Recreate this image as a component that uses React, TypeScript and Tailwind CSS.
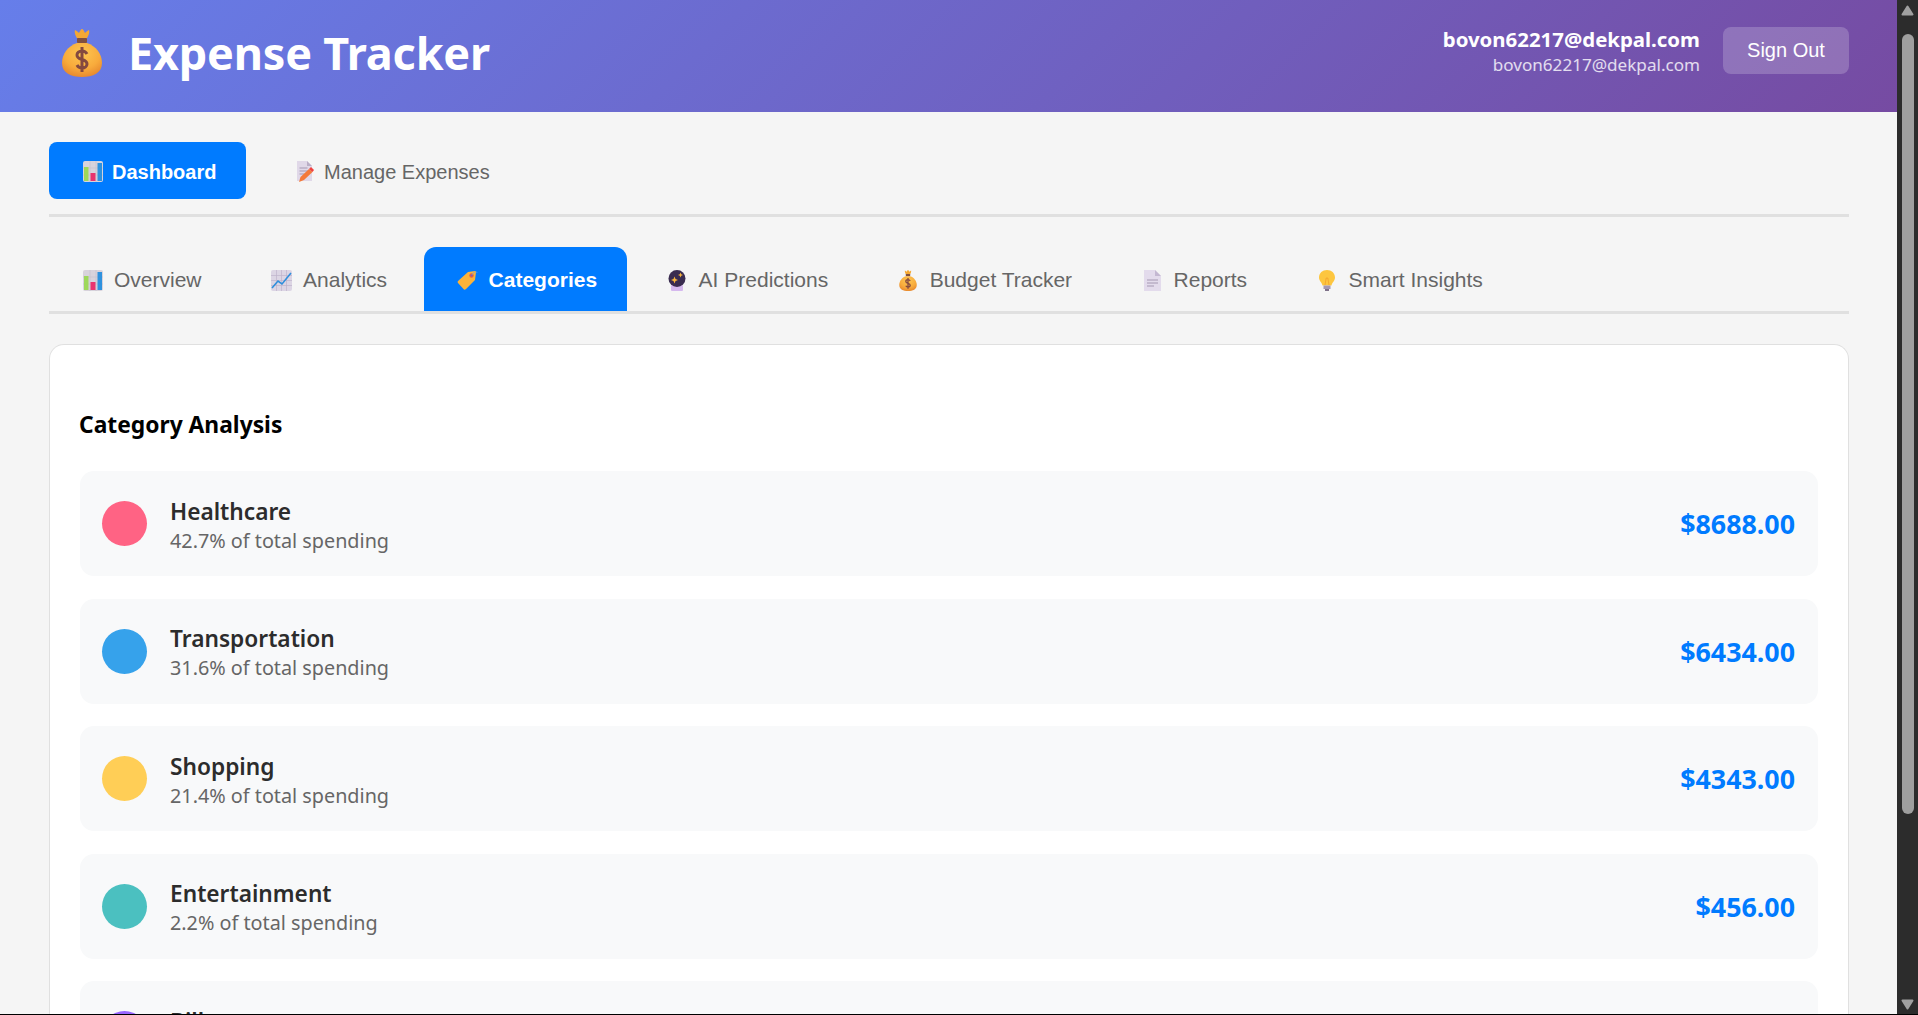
import type { ReactNode } from "react";

const sans = "font-['Liberation_Sans',Arial,sans-serif]";
const ui = "font-['Noto_Sans',sans-serif]";

const BarsIcon = () => (
  <svg width="20" height="21" viewBox="0 0 20 21">
    <rect x="0" y="0" width="20" height="21" rx="2" fill="#d8d3dc" />
    <path d="M0 7h20M0 14h20M7 0v21M13 0v21" stroke="#c6bfce" strokeWidth="0.6" />
    <rect x="1" y="6" width="4.500" height="14" fill="#9ed85a" />
    <rect x="7.500" y="12" width="5" height="8" fill="#e8336f" />
    <rect x="14.500" y="2" width="4.500" height="18" fill="#2f92de" />
  </svg>
);

const MemoIcon = () => (
  <svg width="18" height="21" viewBox="0 0 18 21" className="ml-[5px]">
    <path d="M1 0h10l5 5v15H1z" fill="#e0d8e8" />
    <path d="M11 0l5 5h-5z" fill="#b9aec6" />
    <path d="M3.500 7h8M3.500 10h9M3.500 13h5" stroke="#a598b2" strokeWidth="1" />
    <path d="M3 21l1.500-5L13 8l3.500 3L8 19z" fill="#f47a3a" />
    <path d="M13 8l2-2 3 3-1.500 2z" fill="#f0413f" />
  </svg>
);

const TrendIcon = () => (
  <svg width="21" height="21" viewBox="0 0 21 21">
    <rect width="21" height="21" rx="2" fill="#dcd5e4" />
    <path d="M0 5.500h21M0 10.500h21M0 15.500h21M5.500 0v21M10.500 0v21M15.500 0v21" stroke="#bfb5cc" strokeWidth="0.7" />
    <path d="M1 18l6-7 4 3L20 3" fill="none" stroke="#2f8fdc" strokeWidth="1.600" />
  </svg>
);

const TagIcon = () => (
  <svg width="21" height="20" viewBox="0 0 21 20">
    <path d="M1 11L11 2l7-1c1 0 1 1 1 1l-1 8L9 19c-1 1-2 1-2.500 0L1 13c-.500-.500-.500-1.500 0-2z" fill="#fbb33a" />
    <circle cx="14.500" cy="5.500" r="2.200" fill="#e8633f" />
    <circle cx="14.500" cy="5.500" r="1" fill="#7a5ec0" />
    <path d="M15 5c1-3 4.500-4 5.500-2" fill="none" stroke="#6aa4dc" strokeWidth="0.7" />
  </svg>
);

const BallIcon = () => (
  <svg width="18" height="21" viewBox="0 0 18 21">
    <rect x="3" y="15" width="12" height="6" rx="1" fill="#d5b8ee" />
    <circle cx="9" cy="8.500" r="8.500" fill="#3a2c50" />
    <path d="M6.500 6.500l1 2.500 2.500 1-2.500 1-1 2.500-1-2.500-2.500-1 2.500-1z" fill="#f8b53c" />
    <path d="M12.500 2.500l.700 1.800 1.800.700-1.800.700-.700 1.800-.700-1.800-1.800-.700 1.800-.700z" fill="#f8b53c" />
  </svg>
);

const BagIcon = ({ id, width, height }: { id: string; width: number; height: number }) => (
  <svg width={width} height={height} viewBox="0 0 40 48">
    <defs>
      <radialGradient id={id} cx="0.5" cy="0.3" r="0.75">
        <stop offset="0" stopColor="#fdc651" />
        <stop offset="0.6" stopColor="#f8ab3c" />
        <stop offset="1" stopColor="#e5842c" />
      </radialGradient>
    </defs>
    <path d="M13 1c2 1 3 2 4 3 1-2 2-4 3-4s2 2 3 4c1-1 2-2 4-3 1 2-1 7-2 8H15c-1-1-3-6-2-8z" fill="#f5a832" />
    <rect x="15" y="9" width="10" height="5" rx="1" fill="#80503f" />
    <path d="M15 14h10c9 3 15 11 15 20 0 10-9 14-20 14S0 44 0 34c0-9 6-17 15-20z" fill={`url(#${id})`} />
    <path
      d="M25 25c-1-2-3-3-5-3-3 0-5 2-5 4 0 6 10 3 10 9 0 2-2 4-5 4-2 0-4-1-5-3M20 18v25"
      fill="none"
      stroke="#84493f"
      strokeWidth="3"
    />
  </svg>
);

const PageIcon = () => (
  <svg width="17" height="21" viewBox="0 0 17 21">
    <path d="M0 0h11l6 6v15H0z" fill="#e3dbec" />
    <path d="M11 0l6 6h-6z" fill="#c4b8d2" />
    <path d="M3 10h11M3 13h11M3 16h7" stroke="#a598b2" strokeWidth="1" />
  </svg>
);

const BulbIcon = () => (
  <svg width="16" height="21" viewBox="0 0 16 21">
    <path d="M8 0c4.500 0 8 3 8 7.500 0 3.500-3 5-3.500 8h-9C3 12.500 0 11 0 7.500 0 3 3.500 0 8 0z" fill="#fdc63f" />
    <path d="M6 15l1.200-7h1.600l1.200 7" fill="none" stroke="#f29f2b" strokeWidth="0.8" />
    <rect x="4.500" y="15.500" width="7" height="3.500" fill="#a598b2" />
    <rect x="6" y="19" width="4" height="2" fill="#7e7189" />
  </svg>
);

type Tab = { label: string; icon: ReactNode; active?: boolean };

const subTabs: Tab[] = [
  { label: "Overview", icon: <BarsIcon /> },
  { label: "Analytics", icon: <TrendIcon /> },
  { label: "Categories", icon: <TagIcon />, active: true },
  { label: "AI Predictions", icon: <BallIcon /> },
  { label: "Budget Tracker", icon: <BagIcon id="bag-small" width={18} height={21} /> },
  { label: "Reports", icon: <PageIcon /> },
  { label: "Smart Insights", icon: <BulbIcon /> },
];

const categories = [
  { name: "Healthcare", pct: "42.7%", amount: "$8688.00", color: "bg-[#ff6384]" },
  { name: "Transportation", pct: "31.6%", amount: "$6434.00", color: "bg-[#36a2eb]" },
  { name: "Shopping", pct: "21.4%", amount: "$4343.00", color: "bg-[#ffce56]" },
  { name: "Entertainment", pct: "2.2%", amount: "$456.00", color: "bg-[#4bc0c0]" },
  { name: "Bills", pct: "1.1%", amount: "$220.00", color: "bg-[#9966ff]" },
];

const TabIcon = ({ children }: { children: ReactNode }) => (
  <span className="flex w-[27px] shrink-0 justify-center">{children}</span>
);

const Header = () => (
  <header className="flex h-[112px] shrink-0 items-center justify-between bg-[linear-gradient(135deg,#667eea_0%,#764ba2_100%)] pl-[62px] pr-[48px] text-white">
    <div className="mb-[6px] flex items-center gap-[26px]">
      <BagIcon id="bag-large" width={40} height={48} />
      <h1 className={`${ui} mb-[1px] text-[45px] leading-none font-bold tracking-[-0.2px]`}>Expense Tracker</h1>
    </div>
    <div className="mb-[11px] flex items-center gap-[23px]">
      <div className={`${ui} mt-[2px] text-right`}>
        <div className="text-[20.4px] leading-[25px] font-bold">bovon62217@dekpal.com</div>
        <div className="mt-[2px] text-[17.1px] leading-[22px] text-white/80">bovon62217@dekpal.com</div>
      </div>
      <button className={`${sans} h-[47px] w-[126px] rounded-[8px] bg-white/20 pb-[2px] text-[20px] text-white`}>
        Sign Out
      </button>
    </div>
  </header>
);

const MainNav = () => (
  <nav className={`${sans} flex h-[75px] shrink-0 items-start gap-[13px] border-b-[3px] border-[#e0e0e0] text-[20px]`}>
    <button className="flex h-[57px] w-[197px] items-center gap-[6px] rounded-[8px] bg-[#007bff] pt-[2px] pl-[30px] font-bold text-white">
      <TabIcon>
        <BarsIcon />
      </TabIcon>
      Dashboard
    </button>
    <button className="flex h-[57px] items-center gap-[8px] pt-[2px] pl-[30px] pr-[30px] text-[#666666]">
      <TabIcon>
        <MemoIcon />
      </TabIcon>
      Manage Expenses
    </button>
  </nav>
);

const SubNav = () => (
  <nav className={`${sans} mt-[30px] flex h-[67px] shrink-0 items-start gap-[6.5px] border-b-[3px] border-[#e0e0e0] text-[21px]`}>
    {subTabs.map((tab) => (
      <button
        key={tab.label}
        className={`flex h-[64px] items-center gap-[8px] px-[30px] pt-[2px] ${
          tab.active ? "rounded-t-[12px] bg-[#007bff] font-bold text-white" : "text-[#666666]"
        }`}
      >
        <TabIcon>{tab.icon}</TabIcon>
        {tab.label}
      </button>
    ))}
  </nav>
);

const CategoryRow = ({ name, pct, amount, color }: (typeof categories)[number]) => (
  <div className="flex h-[105px] shrink-0 items-center justify-between rounded-[14px] bg-[#f8f9fa] pl-[22px] pr-[23px]">
    <div className="flex items-center gap-[23px]">
      <div className={`h-[45px] w-[45px] rounded-full ${color}`} />
      <div className="mt-[4px]">
        <div className="text-[22.7px] leading-[30px] font-semibold text-[#2c2c2c]">{name}</div>
        <div className="text-[19.8px] leading-[28px] text-[#666666]">{pct} of total spending</div>
      </div>
    </div>
    <div className="mt-[2px] text-[26.8px] font-bold text-[#007bff]">{amount}</div>
  </div>
);

const Scrollbar = () => (
  <div className="flex w-[21px] shrink-0 flex-col items-center bg-[#2c2c2c] pb-[4px]">
    <svg width="13" height="11" viewBox="0 0 13 11" className="mt-[5px]">
      <path d="M6.500 1.500l5 8h-10z" fill="#a0a0a0" stroke="#a0a0a0" strokeLinejoin="round" strokeWidth="2" />
    </svg>
    <div className="mt-[18px] h-[780px] w-[12px] rounded-full bg-[#9f9f9f]" />
    <svg width="13" height="11" viewBox="0 0 13 11" className="mt-auto">
      <path d="M6.500 9.500l5-8h-10z" fill="#a0a0a0" stroke="#a0a0a0" strokeLinejoin="round" strokeWidth="2" />
    </svg>
  </div>
);

export default function App() {
  return (
    <div className="flex h-[1015px] w-full flex-col overflow-hidden bg-[#f5f5f5]">
      <div className="flex h-[1014px] shrink-0">
        <div className="flex min-w-0 flex-1 flex-col overflow-hidden">
          <Header />
          <main className="flex min-h-0 flex-1 flex-col pl-[49px] pr-[48px] pt-[30px]">
            <MainNav />
            <SubNav />
            <section className={`${ui} mt-[30px] flex flex-1 flex-col rounded-t-[15px] border border-b-0 border-[#e0e0e0] bg-white px-[30px] pt-[65px]`}>
              <h2 className="mb-[31px] ml-[-1px] text-[22.8px] leading-[30px] font-bold text-black">Category Analysis</h2>
              <div className="flex flex-col gap-[22.5px]">
                {categories.map((c) => (
                  <CategoryRow key={c.name} {...c} />
                ))}
              </div>
            </section>
          </main>
        </div>
        <Scrollbar />
      </div>
      <div className="h-px shrink-0 bg-black" />
    </div>
  );
}
